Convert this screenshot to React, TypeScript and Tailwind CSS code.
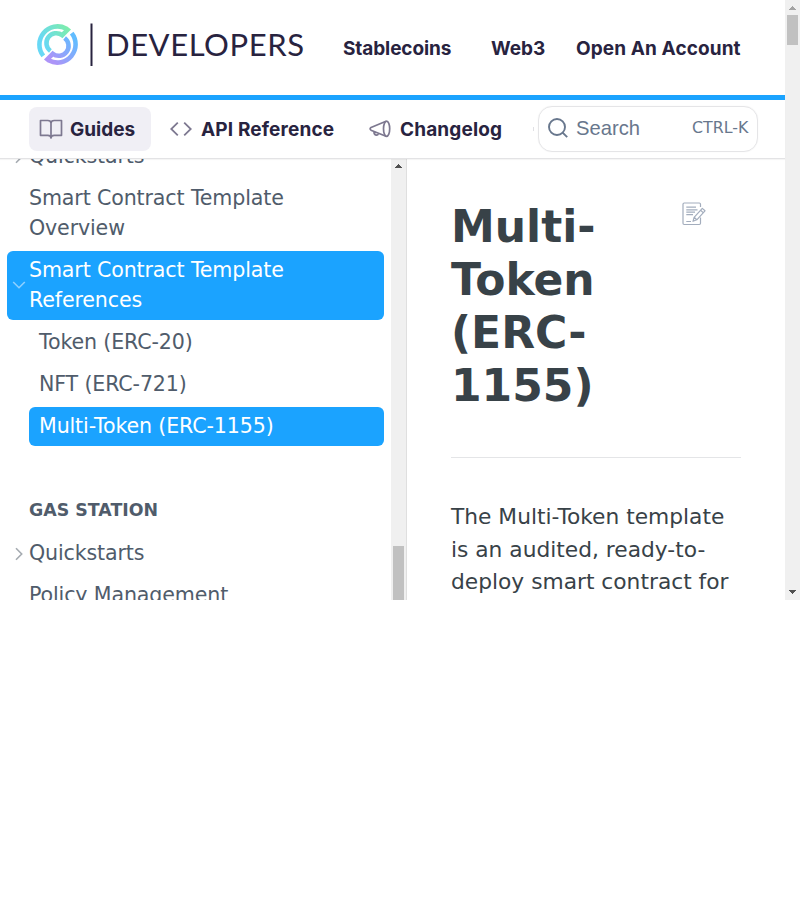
import React from "react";

function Logo() {
  return (
    <svg width="270" height="50" viewBox="0 0 270 50" className="block shrink-0">
      <defs>
        <linearGradient id="top" gradientUnits="userSpaceOnUse" x1="5" y1="24" x2="32" y2="8">
          <stop offset="0.1" stopColor="#68d8f5" />
          <stop offset="1" stopColor="#7cecae" />
        </linearGradient>
        <linearGradient id="bottom" gradientUnits="userSpaceOnUse" x1="14" y1="42" x2="38" y2="18">
          <stop offset="0.1" stopColor="#ad94f8" />
          <stop offset="1" stopColor="#62bcff" />
        </linearGradient>
      </defs>
      <path fill="none" stroke="url(#top)" strokeWidth="4.6" d="M8.3 35.9A18.2 18.2 0 0 1 31 8.5L32.6 9.8L27.2 15.2A9.6 9.6 0 0 0 15.4 31" />
      <path fill="none" stroke="url(#bottom)" strokeWidth="4.6" d="M36.7 13.1A18.2 18.2 0 0 1 14 40.5L12.4 39.2L17.8 33.8A9.6 9.6 0 0 0 29.6 18" />
      <path stroke="#28233f" strokeWidth="2" d="M56.5 3.5V46" />
      <text x="71" y="35.5" fill="#28233f" textLength="198" lengthAdjust="spacing" className="font-['Lato',sans-serif] text-[31px]">DEVELOPERS</text>
    </svg>
  );
}

function BookIcon() {
  return (
    <svg width="24" height="20" viewBox="0 0 24 20" fill="none" stroke="#7d7890" strokeWidth="1.7" strokeLinejoin="round" className="block shrink-0">
      <path d="M12 4.2Q12 1.5 8.8 1.5H1.5V16.3H8.8Q12 16.3 12 19V4.2Q12 1.5 15.2 1.5H22.5V16.3H15.2Q12 16.3 12 19" />
    </svg>
  );
}

function CodeIcon() {
  return (
    <svg width="22" height="14" viewBox="0 0 22 14" fill="none" stroke="#7d7890" strokeWidth="1.8" className="block shrink-0">
      <path d="M7.8 .7L1.2 7L7.8 13.3M14.2 .7L20.8 7L14.2 13.3" />
    </svg>
  );
}

function MegaphoneIcon() {
  return (
    <svg width="22" height="18" viewBox="0 0 22 18" fill="none" stroke="#7d7890" strokeWidth="1.7" strokeLinejoin="round" className="block shrink-0">
      <ellipse cx="17.6" cy="8.8" rx="3.1" ry="7.6" />
      <path d="M17 1.3L2 7.5Q.2 8.8 2 10.2L17 16.3M5 11.5Q4.8 14.6 7.2 15.1Q9 15.3 9.3 13.3" />
    </svg>
  );
}

function Chevron({ open = false }: { open?: boolean }) {
  return (
    <svg width="14" height="14" viewBox="0 0 14 14" fill="none" stroke={open ? "#8fd0ff" : "#a5abb1"} strokeWidth="1.6" className="block shrink-0">
      <path d={open ? "M1.2 4L7 9.7L12.8 4" : "M4 1.2L9.7 7L4 12.8"} />
    </svg>
  );
}

function EditIcon() {
  return (
    <svg width="24" height="24" viewBox="0 0 24 24" fill="none" stroke="#a3adbd" strokeWidth="1.2" strokeLinejoin="round" className="block shrink-0">
      <path d="M18.5 5V2.2Q18.5 1 17.3 1H2.2Q1 1 1 2.2V21.3Q1 22.5 2.2 22.5H17.3Q18.5 22.5 18.5 21.3V15.5" />
      <path d="M4.3 5.2H14M4.3 7.8H15.5M4.3 10.2H13M4.3 12.6H11M4.3 19.5H9M11 19.3L12.1 15.3L20.3 6.4L23 8.8L14.8 17.8L11 19.3ZM12.1 15.3L14.8 17.8M18.6 8.3L21.2 10.6" />
    </svg>
  );
}

function Arrow({ down = false, muted = false }: { down?: boolean; muted?: boolean }) {
  return (
    <svg width="7" height="4" viewBox="0 0 7 4" shapeRendering="crispEdges" fill={muted ? "#a3a3a3" : "#505050"} className="block">
      <path d={down ? "M0 0H7L3.5 4Z" : "M0 4H7L3.5 0Z"} />
    </svg>
  );
}

const navText = "font-['Inter',sans-serif] font-bold text-[19px] leading-6 text-[#28233f] whitespace-nowrap";
const rowText = "flex mb-[3px] rounded-md pt-1 pb-[5px] text-[20.6px] tracking-[-0.14px] leading-[30px]";

export default function App() {
  return (
    <div className="h-[900px] w-[800px] bg-white">
      <div className="flex h-[600px] overflow-hidden font-['DejaVu_Sans',sans-serif]">
        <div className="flex w-[785px] flex-col">
          <header className="flex h-[100px] shrink-0 items-start border-b-[5px] border-[#1ba3ff] pl-[35px]">
            <div className="w-[308px] pt-5"><Logo /></div>
            <nav className="flex pt-[37px]">
              <span className={`${navText} w-[148px] tracking-[-0.1px]`}>Stablecoins</span>
              <span className={`${navText} w-[85px]`}>Web3</span>
              <span className={`${navText} tracking-[0.1px]`}>Open An Account</span>
            </nav>
          </header>
          <div className="relative z-10 flex h-[59px] shrink-0 items-start border-b border-[#e3e3e5] bg-white pl-[29px] shadow-[0_1px_1px_rgba(0,0,0,0.04)]">
            <div className="mt-[7px] flex h-11 w-[122px] items-center rounded-lg bg-[#f0eff5] pl-[10px]">
              <BookIcon />
              <span className={`${navText} mt-0.5 ml-[7px]`}>Guides</span>
            </div>
            <div className="mt-[7px] flex h-11 w-[199px] items-center pl-[18.5px]">
              <CodeIcon />
              <span className={`${navText} mt-0.5 ml-[9.5px] tracking-[0.15px]`}>API Reference</span>
            </div>
            <div className="mt-[7px] flex h-11 w-[183px] items-center pl-[18.5px]">
              <MegaphoneIcon />
              <span className={`${navText} mt-0.5 ml-[9.5px] tracking-[0.15px]`}>Changelog</span>
            </div>
            <div className="mt-[27px] h-1 w-px bg-[#e0e0e4]" />
            <div className="mt-[5.5px] ml-[3.5px] flex h-[46.5px] w-[220px] items-center rounded-[14px] border-[1.5px] border-[#e5e5e7] pl-[9px] shadow-[0_0_1px_rgba(0,0,0,0.1)]">
              <svg width="20" height="20" viewBox="0 0 20 20" fill="none" stroke="#68778d" strokeWidth="1.9" className="-mt-px block shrink-0">
                <circle cx="9" cy="9" r="8" /><path d="M14.6 14.6L19.2 19.2" />
              </svg>
              <span className="-mt-px ml-[8.5px] w-[116px] font-['Liberation_Sans',sans-serif] text-[20.2px] leading-6 text-[#68778d]">Search</span>
              <span className="-mt-px text-[15.8px] leading-6 whitespace-nowrap text-[#68778d]">CTRL-K</span>
            </div>
          </div>
          <div className="flex min-h-0 flex-1">
            <aside className="h-full w-[391px] overflow-hidden pr-[7px] pl-[7px] text-[#505c6b]">
              <div className={`${rowText} -mt-[22px] pl-[5px]`}>
                <span className="mr-[3px] pt-[9px]"><Chevron /></span>Quickstarts
              </div>
              <div className={`${rowText} pl-[22px]`}>Smart Contract Template<br />Overview</div>
              <div className={`${rowText} items-center bg-[#1ba3ff] pl-[5px] text-white`}>
                <span className="mr-[3px]"><Chevron open /></span>
                <span>Smart Contract Template<br />References</span>
              </div>
              <div className={`${rowText} ml-[22px] pl-[10px]`}>Token (ERC-20)</div>
              <div className={`${rowText} ml-[22px] pl-[10px]`}>NFT (ERC-721)</div>
              <div className={`${rowText} ml-[22px] bg-[#1ba3ff] pl-[10px] text-white`}>Multi-Token (ERC-1155)</div>
              <div className="mt-[52px] mb-[12px] pl-[22px] text-[17.4px] leading-[24px] font-bold">GAS STATION</div>
              <div className={`${rowText} pl-[5px]`}>
                <span className="mr-[3px] pt-[9px]"><Chevron /></span>Quickstarts
              </div>
              <div className={`${rowText} pl-[22px]`}>Policy Management</div>
            </aside>
            <div className="flex w-[16px] flex-col justify-between border-r border-[#dfdfdf] bg-[#f0f0f0]">
              <div className="pt-[5px] pl-1"><Arrow /></div>
              <div className="ml-[2px] h-[54px] w-[11px] bg-[#c1c1c1]" />
            </div>
            <main className="flex-1 overflow-hidden pr-[44px] pl-[44px] text-[#384248]">
              <div className="flex h-[299px] items-start justify-between border-b border-[#e4e5e7] pt-[42.4px]">
                <h1 className="text-[44px] leading-[52.8px] font-bold">Multi-<br />Token<br />(ERC-<br />1155)</h1>
                <div className="mt-[0.6px] mr-[35px]"><EditIcon /></div>
              </div>
              <p className="mt-[43px] text-[21.75px] leading-[32.6px] whitespace-nowrap">The Multi-Token template<br />is an audited, ready-to-<br />deploy smart contract for</p>
            </main>
          </div>
        </div>
        <div className="flex w-[15px] flex-col bg-[#f0f0f0]">
          <div className="h-[15px] pt-[6px] pl-1"><Arrow muted /></div>
          <div className="ml-[2px] h-[30px] w-[11px] bg-[#c1c1c1]" />
          <div className="mt-auto pb-[6px] pl-1"><Arrow down /></div>
        </div>
      </div>
    </div>
  );
}
